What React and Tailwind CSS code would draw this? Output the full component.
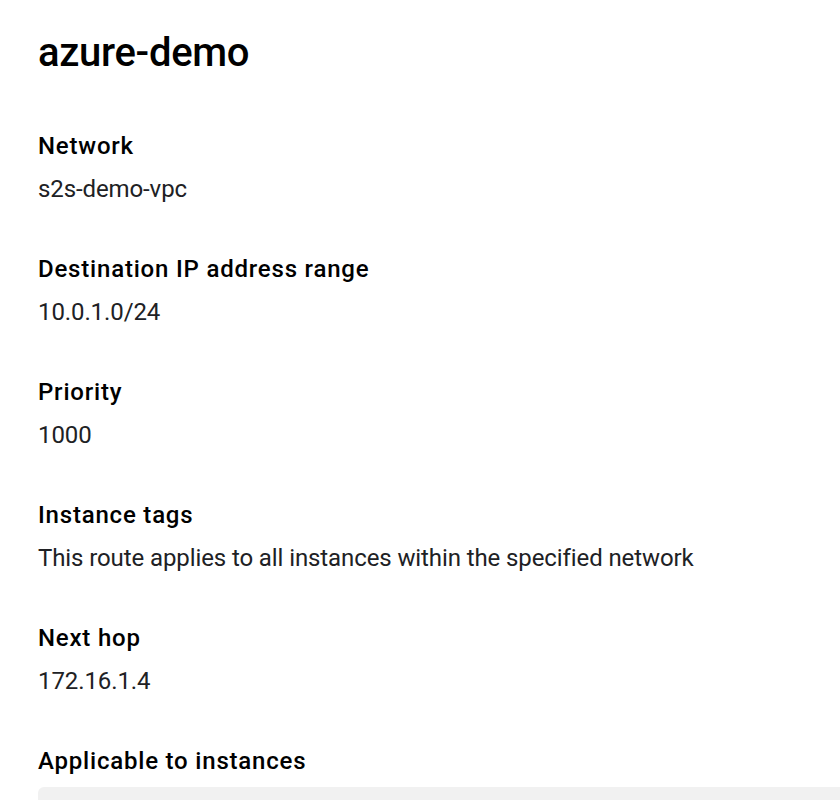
export default function App() {
  const rows = [
    ["Network", "s2s-demo-vpc"],
    ["Destination IP address range", "10.0.1.0/24"],
    ["Priority", "1000"],
    ["Instance tags", "This route applies to all instances within the specified network"],
    ["Next hop", "172.16.1.4"],
  ];
  return (
    <div className="h-[800px] w-full overflow-hidden bg-white pl-[38px] pt-[29px] text-[#202124]" style={{ fontFamily: "Roboto, 'Liberation Sans', sans-serif" }}>
      <h1 className="text-[40px] font-medium leading-[48px] tracking-[-0.3px] text-black">azure-demo</h1>
      <div className="mt-[53px] flex flex-col gap-[48px]">
        {rows.map(([label, value]) => (
          <div key={label} className="flex flex-col gap-[11px]">
            <div className="text-[24px] font-medium leading-[32px] tracking-[0.8px] text-black">{label}</div>
            <div className="text-[24px] leading-[32px] tracking-[-0.1px] text-[#202124]">{value}</div>
          </div>
        ))}
        <div className="flex flex-col gap-[10px]">
          <div className="text-[24px] font-medium leading-[32px] tracking-[0.8px] text-black">Applicable to instances</div>
          <div className="h-[120px] rounded-l-[6px] bg-[#f1f1f1]" />
        </div>
      </div>
    </div>
  );
}
